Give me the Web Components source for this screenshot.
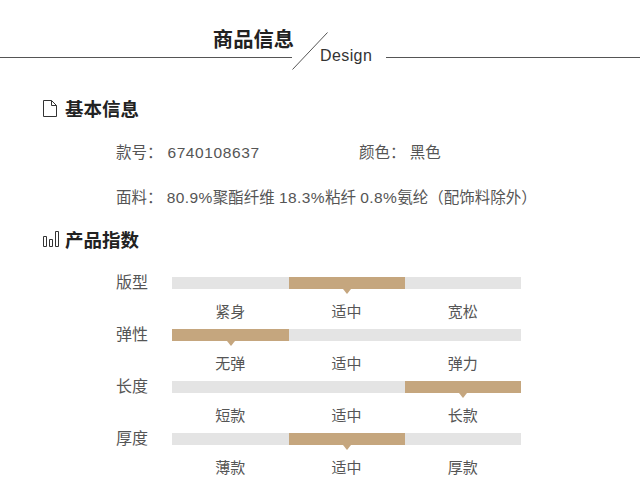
<!DOCTYPE html>
<html lang="zh">
<head>
<meta charset="utf-8">
<title>商品信息</title>
<style>
  html, body { margin: 0; background: #fff; }
  body { width: 640px; height: 477px; overflow: hidden; font-family: "Liberation Sans", "Noto Sans CJK SC", sans-serif; }
</style>
</head>
<body>
<product-info></product-info>

<template id="tpl-header">
  <style>
    :host { display: flex; height: 57px; padding-top: 13px; align-items: flex-start; }
    .left { width: 292px; height: 45px; box-sizing: border-box; border-bottom: 1px solid #555; display: flex; justify-content: flex-end; }
    .titulo { font-size: 20.3px; font-weight: 700; color: #222; line-height: 28px; margin-right: -2px; margin-top: 13px; }
    svg { display: block; margin-top: 19px; flex: none; }
    .design { font-size: 16px; color: #333; margin: 34px 0 0 -8px; line-height: 18px; letter-spacing: .4px; }
    .right { flex: 1; height: 45px; box-sizing: border-box; border-bottom: 1px solid #555; margin-left: 14px; }
  </style>
  <div class="left"><span class="titulo">商品信息</span></div>
  <svg width="36" height="38" viewBox="0 0 36 38"><path d="M0.5 37.5 L35.5 0.5" stroke="#555" stroke-width="1" fill="none"/></svg>
  <span class="design">Design</span>
  <div class="right"></div>
</template>

<template id="tpl-heading">
  <style>
    :host { display: flex; align-items: center; gap: 7px; padding-left: 42px; height: 22px; font-size: 18.5px; font-weight: 700; color: #222; }
    ::slotted(svg) { display: block; flex: none; }
  </style>
  <slot name="icon"></slot>
  <slot></slot>
</template>

<template id="tpl-info-row">
  <style>
    :host { display: flex; padding-left: 116px; height: 22px; line-height: 22px; font-size: 15.5px; color: #555; white-space: nowrap; }
    ::slotted(span) { display: block; }
  </style>
  <slot></slot>
</template>

<template id="tpl-index-row">
  <style>
    :host { display: grid; grid-template-columns: 56px 349px; padding-left: 116px; height: 52px; color: #555; font-size: 15px; }
    .nombre { font-size: 16px; line-height: 14px; margin-top: -1px; }
    .barra { display: grid; grid-template-columns: 117px 116px 116px; height: 12px; background: #e4e4e4; }
    .seg { position: relative; }
    .seg.on { background: #c5a67e; }
    .seg.on::after { content: ""; position: absolute; left: 50%; top: 12px; margin-left: -4px; border: 4px solid transparent; border-top: 5px solid #c5a67e; border-bottom: 0; }
    .labels { display: grid; grid-template-columns: repeat(3, 1fr); text-align: center; margin-top: 14px; line-height: 18px; }
  </style>
  <div class="nombre"></div>
  <div>
    <div class="barra"><div class="seg"></div><div class="seg"></div><div class="seg"></div></div>
    <div class="labels"><span></span><span></span><span></span></div>
  </div>
</template>

<template id="tpl-product">
  <style>
    :host { display: block; }
    .h1 { margin-top: 27px; }
    .r1 { margin-top: 23px; }
    .r2 { margin-top: 23px; }
    .h2 { margin-top: 19px; }
    .filas { margin-top: 27px; }
    .campo { width: 243px; }
    .num { letter-spacing: .6px; }
    .latin { letter-spacing: .4px; }
  </style>
  <section-header></section-header>
  <section-heading class="h1">
    <svg slot="icon" width="16" height="19" viewBox="0 0 16 19"><path d="M1.5 1.5 H9.5 L14.5 6.5 V17.5 H1.5 Z M9.5 1.5 V6.5 H14.5" fill="none" stroke="#333" stroke-width="1"/></svg>
    基本信息
  </section-heading>
  <info-row class="r1"><span class="campo">款号：<span class="num">&nbsp;6740108637</span></span><span>颜色：&nbsp;黑色</span></info-row>
  <info-row class="r2"><span>面料：&nbsp;<span class="latin">80.9%</span>聚酯纤维 <span class="latin">18.3%</span>粘纤 <span class="latin">0.8%</span>氨纶（配饰料除外）</span></info-row>
  <section-heading class="h2">
    <svg slot="icon" width="18" height="18" viewBox="0 0 18 18" style="margin-right:-2px"><path d="M1.5 6.5 H4.5 V16.5 H1.5 Z M7.5 9.5 H10.5 V16.5 H7.5 Z M13.5 1.5 H16.5 V16.5 H13.5 Z" fill="none" stroke="#333" stroke-width="1"/></svg>
    产品指数
  </section-heading>
  <div class="filas">
    <index-row nombre="版型" a="紧身" b="适中" c="宽松" activo="1"></index-row>
    <index-row nombre="弹性" a="无弹" b="适中" c="弹力" activo="0"></index-row>
    <index-row nombre="长度" a="短款" b="适中" c="长款" activo="2"></index-row>
    <index-row nombre="厚度" a="薄款" b="适中" c="厚款" activo="1"></index-row>
  </div>
</template>

<script>
function usarPlantilla(el, id) {
  el.attachShadow({ mode: "open" });
  el.shadowRoot.appendChild(document.getElementById(id).content.cloneNode(true));
}

class SectionHeader extends HTMLElement {
  constructor() { super(); usarPlantilla(this, "tpl-header"); }
}
class SectionHeading extends HTMLElement {
  constructor() { super(); usarPlantilla(this, "tpl-heading"); }
}
class InfoRow extends HTMLElement {
  constructor() { super(); usarPlantilla(this, "tpl-info-row"); }
}
class IndexRow extends HTMLElement {
  constructor() { super(); usarPlantilla(this, "tpl-index-row"); }
  connectedCallback() {
    const root = this.shadowRoot;
    root.querySelector(".nombre").textContent = this.getAttribute("nombre");
    const spans = root.querySelectorAll(".labels span");
    ["a", "b", "c"].forEach((k, i) => { spans[i].textContent = this.getAttribute(k); });
    root.querySelectorAll(".seg")[Number(this.getAttribute("activo"))].classList.add("on");
  }
}
class ProductInfo extends HTMLElement {
  constructor() { super(); usarPlantilla(this, "tpl-product"); }
}

customElements.define("section-header", SectionHeader);
customElements.define("section-heading", SectionHeading);
customElements.define("info-row", InfoRow);
customElements.define("index-row", IndexRow);
customElements.define("product-info", ProductInfo);
</script>
</body>
</html>
